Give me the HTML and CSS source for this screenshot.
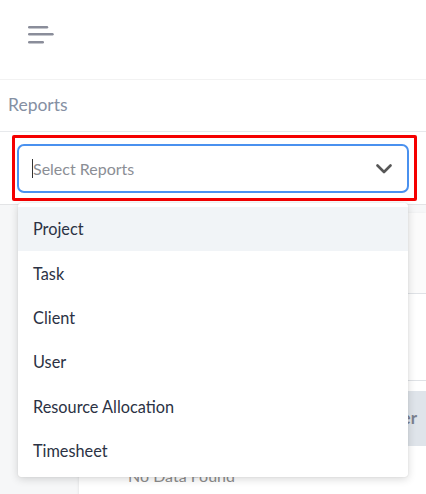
FILE: index.html
```html
<!DOCTYPE html>
<html>
<head>
<meta charset="utf-8">
<link rel="stylesheet" href="styles.css">
</head>
<body>
<header class="topbar">
  <button class="menu-btn" aria-label="Menu">
    <svg width="26" height="19" viewBox="0 0 26 19">
      <line x1="1.2" y1="2.2" x2="19" y2="2.2" />
      <line x1="1.2" y1="9.3" x2="24.5" y2="9.3" />
      <line x1="1.2" y1="17.2" x2="14.8" y2="17.2" />
    </svg>
  </button>
</header>
<div class="title-row">Reports</div>
<div class="filter-row">
  <div class="highlight">
    <div class="select">
      <span class="caret"></span>
      <span class="placeholder">Select Reports</span>
      <svg class="chevron" width="16" height="10" viewBox="0 0 16 10">
        <polyline points="1.5,1.5 8,8 14.5,1.5" />
      </svg>
    </div>
    <ul class="menu">
      <li class="item active">Project</li>
      <li class="item">Task</li>
      <li class="item">Client</li>
      <li class="item">User</li>
      <li class="item">Resource Allocation</li>
      <li class="item">Timesheet</li>
    </ul>
  </div>
</div>
<main class="content">
  <section class="card">
    <div class="card-top"></div>
    <div class="card-row"></div>
    <div class="table-head">
      <span>Project Name</span>
      <span>Manager</span>
    </div>
    <div class="empty">No Data Found</div>
  </section>
</main>
</body>
</html>
```

FILE: styles.css
```css
* { box-sizing: border-box; }
html, body { margin: 0; padding: 0; }
body {
  width: 426px;
  height: 494px;
  overflow: hidden;
  background: #ffffff;
  font-family: Lato, "Open Sans", Arial, sans-serif;
}
.topbar {
  height: 80px;
  border-bottom: 1px solid #f2f2f2;
  display: flex;
  align-items: flex-start;
  padding: 25px 0 0 28px;
}
.menu-btn {
  border: 0;
  background: none;
  padding: 0;
  display: block;
}
.menu-btn svg { display: block; }
.menu-btn line {
  stroke: #8a8d9a;
  stroke-width: 2.4;
  stroke-linecap: round;
}
.title-row {
  height: 52px;
  border-bottom: 1px solid #e7e9ec;
  padding: 14px 0 0 8px;
  font-size: 17.5px;
  color: #8590a3;
  line-height: 22px;
}
.filter-row {
  height: 73px;
  border-bottom: 1px solid #e3e4e6;
  padding: 3px 0 0 12px;
  position: relative;
  z-index: 5;
}
.highlight {
  position: relative;
  width: 405px;
  height: 66px;
  border: 3px solid #f50000;
  border-radius: 2px;
  padding: 6px 5px 5px 2px;
}
.select {
  position: relative;
  height: 49px;
  border: 2px solid #4a91ef;
  border-radius: 7px;
  display: flex;
  align-items: center;
  padding: 0 15px 0 13px;
  background: #fff;
}
.caret {
  width: 1px;
  height: 19px;
  background: #333;
}
.placeholder {
  flex: 1;
  font-size: 16px;
  color: #8b8e95;
  line-height: 20px;
}
.chevron polyline {
  fill: none;
  stroke: #575757;
  stroke-width: 2.6;
  stroke-linecap: round;
  stroke-linejoin: round;
}
.menu {
  position: absolute;
  left: 3px;
  top: 65px;
  width: 390px;
  margin: 0;
  padding: 4px 0 4px;
  list-style: none;
  background: #fff;
  border-radius: 3px;
  box-shadow: 0 2px 8px rgba(0,0,0,0.16), 0 0 1px rgba(0,0,0,0.18);
}
.item {
  height: 44.4px;
  display: flex;
  align-items: center;
  padding-left: 15px;
  padding-bottom: 1px;
  font-size: 16.3px;
  color: #2b3244;
}
.item.active { background: #f1f4f7; }
.content {
  height: 290px;
  background: #f6f7f8;
  padding: 8px 0 0 79px;
}
.card {
  height: 300px;
  background: #fff;
  box-shadow: -1px 0 2px rgba(0,0,0,0.06);
}
.card-top {
  height: 81px;
  border-bottom: 1px solid #dfe2e6;
  background: #fbfbfb;
}
.card-row {
  height: 87px;
  border-bottom: 1px solid #dfe2e6;
}
.table-head {
  height: 55px;
  background: #dfe4ea;
  display: flex;
  justify-content: space-between;
  align-items: center;
  padding: 0 9px 2px 20px;
  font-size: 17px;
  font-weight: 700;
  color: #7b8190;
  margin-top: 10px;
  line-height: 20px;
}
.empty {
  padding: 20px 0 0 49px;
  font-size: 16px;
  color: #8c8c8c;
  line-height: 20px;
}
```
